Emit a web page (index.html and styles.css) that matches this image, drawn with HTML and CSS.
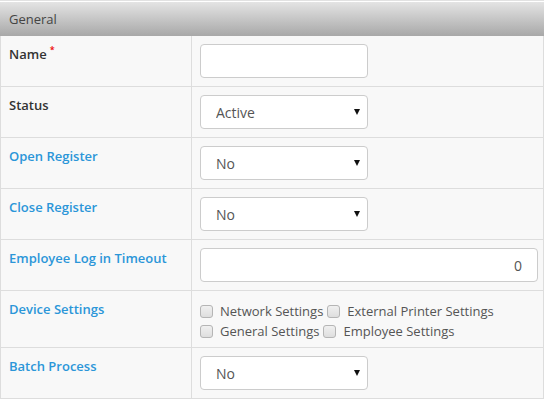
FILE: index.html
```html
<!doctype html>
<html>

<head>
  <title>General</title>
  <meta charset="utf-8">
  <link rel="stylesheet" href="styles.css">
</head>

<body>
  <div class="panel">
    <div class="panel-heading">General</div>
    <table class="form-table">
      <tr>
        <td class="label">Name<span class="req">*</span></td>
        <td class="field"><input type="text" class="input short"></td>
      </tr>
      <tr>
        <td class="label">Status</td>
        <td class="field">
          <div class="select-wrap">
            <select class="select"><option>Active</option><option>Inactive</option></select>
          </div>
        </td>
      </tr>
      <tr>
        <td class="label link">Open Register</td>
        <td class="field">
          <div class="select-wrap">
            <select class="select"><option>No</option><option>Yes</option></select>
          </div>
        </td>
      </tr>
      <tr>
        <td class="label link">Close Register</td>
        <td class="field">
          <div class="select-wrap">
            <select class="select"><option>No</option><option>Yes</option></select>
          </div>
        </td>
      </tr>
      <tr>
        <td class="label link">Employee Log in Timeout</td>
        <td class="field"><input type="text" class="input wide num" value="0"></td>
      </tr>
      <tr>
        <td class="label link">Device Settings</td>
        <td class="field checks">
          <div class="check-line">
            <label class="check"><input type="checkbox"> Network Settings</label>
            <label class="check"><input type="checkbox"> External Printer Settings</label>
          </div>
          <div class="check-line">
            <label class="check"><input type="checkbox"> General Settings</label>
            <label class="check"><input type="checkbox"> Employee Settings</label>
          </div>
        </td>
      </tr>
      <tr>
        <td class="label link">Batch Process</td>
        <td class="field">
          <div class="select-wrap">
            <select class="select"><option>No</option><option>Yes</option></select>
          </div>
        </td>
      </tr>
    </table>
  </div>
</body>

</html>
```

FILE: styles.css
```css
body {
  margin: 0;
  background-color: #fff;
  font-family: "Open Sans", "Liberation Sans", sans-serif;
  font-size: 13px;
  color: #333;
}

.panel {
  border-top: 1px solid #e2e2e2;
}

.panel-heading {
  height: 34px;
  line-height: 34px;
  padding: 0 9px;
  margin-top: 1px;
  color: #444;
  background-image: linear-gradient(#e4e4e4, #a8a8a8);
}

.form-table {
  width: 100%;
  table-layout: fixed;
  border-collapse: collapse;
  background-color: #f8f8f8;
}

.form-table td {
  border: 1px solid #dddddd;
  vertical-align: top;
  padding: 8px;
}

.form-table tr:first-child td {
  border-top: none;
}

.label {
  width: 174px;
  line-height: 20px;
  font-weight: 600;
  color: #333;
}

.label.link {
  color: #2b96d8;
}

.req {
  color: #e00;
  font-size: 9px;
  vertical-align: top;
  line-height: 12px;
  margin-left: 3px;
}

.input {
  display: block;
  box-sizing: border-box;
  height: 34px;
  margin: 0;
  padding: 0 15px;
  border: 1px solid #cccccc;
  border-radius: 4px;
  background-color: #fff;
  font-family: "Open Sans", "Liberation Sans", sans-serif;
  font-size: 14px;
  color: #555;
}

.input.short {
  width: 168px;
}

.input.wide {
  width: 338px;
}

.input.num {
  text-align: right;
}

.select-wrap {
  position: relative;
  width: 168px;
}

.select-wrap::after {
  content: "";
  position: absolute;
  top: 14px;
  right: 8px;
  border-left: 3px solid transparent;
  border-right: 3px solid transparent;
  border-top: 6px solid #111;
  pointer-events: none;
}

.select {
  display: block;
  box-sizing: border-box;
  width: 168px;
  height: 34px;
  margin: 0;
  padding: 0 15px;
  border: 1px solid #cccccc;
  border-radius: 4px;
  background-color: #fff;
  font-family: "Open Sans", "Liberation Sans", sans-serif;
  font-size: 14px;
  color: #555;
  -webkit-appearance: none;
  appearance: none;
}

.form-table td.checks {
  padding: 10px 8px 6px;
}

.check-line {
  display: flex;
  line-height: 20px;
  color: #555;
}

.check {
  display: flex;
  align-items: center;
  margin-right: 4px;
}

.check input {
  -webkit-appearance: none;
  appearance: none;
  box-sizing: border-box;
  width: 13px;
  height: 13px;
  margin: 0 7px 0 0;
  border: 1px solid #b5b5b5;
  border-radius: 3px;
  background-image: linear-gradient(#f0f0f0, #dedede);
}
```
